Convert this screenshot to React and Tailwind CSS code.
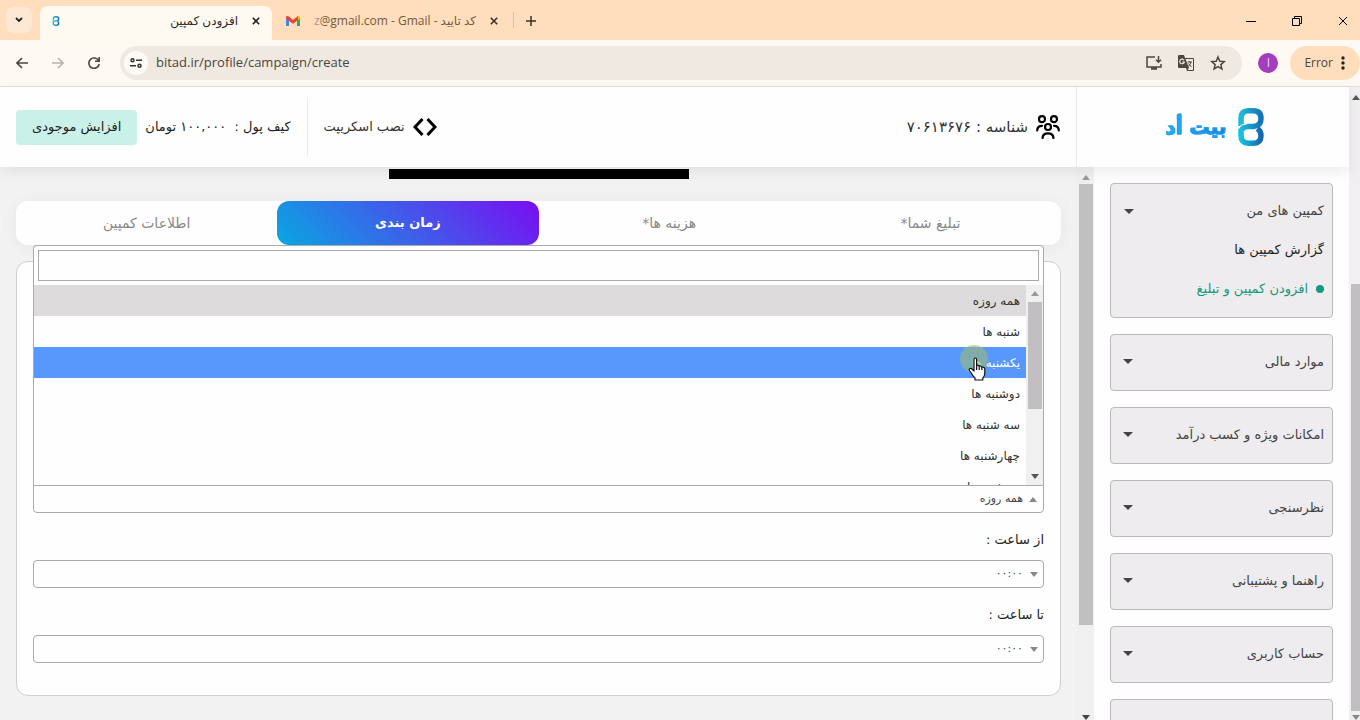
import { useState } from 'react';

const MENU_ITEMS = [
    "موارد مالی", "امکانات ویژه و کسب درآمد", "نظرسنجی",
    "راهنما و پشتیبانی", "حساب کاربری"
];

const DAYS = [
    "همه روزه", "شنبه ها", "یکشنبه ها", "دوشنبه ها",
    "سه شنبه ها", "چهارشنبه ها", "پنجشنبه ها"
];

const STEPS = ["تبلیغ شما*", "هزینه ها*", "زمان بندی", "اطلاعات کمپین"];

const Triangle = ({ up = false, className = '' }) => (
    <svg viewBox="0 0 8 5" className={`h-[5px] shrink-0 ${className}`} fill="currentColor" preserveAspectRatio="none" aria-hidden="true">
        <path d={up ? "M0 5L4 0L8 5Z" : "M0 0H8L4 5Z"} />
    </svg>
);

const CloseIcon = ({ className = '' }) => (
    <svg viewBox="0 0 10 10" className={className} stroke="currentColor" fill="none" aria-hidden="true">
        <path d="M1 1L9 9M9 1L1 9" />
    </svg>
);

const BrandMark = ({ className = '' }) => (
    <svg viewBox="0 0 26 38" className={className} fill="none" strokeWidth="5.500" aria-hidden="true">
        <defs>
            <linearGradient id="markTop" x1="0" y1="0" x2="1" y2="0">
                <stop offset="0" stopColor="#22b9dc" />
                <stop offset="1" stopColor="#1574b5" />
            </linearGradient>
            <linearGradient id="markBottom" x1="0" y1="0" x2="1" y2="0">
                <stop offset="0" stopColor="#12c3e6" />
                <stop offset="1" stopColor="#1768ab" />
            </linearGradient>
        </defs>
        <path d="M3 18V10.500Q3 2.800 10.500 2.800H15Q23 2.800 23 10.500Q23 18 15.500 18.500H10Q5 18.800 3.500 22" stroke="url(#markTop)" />
        <path d="M3 21V27.500Q3 35.200 10.500 35.200H15.500Q23 35.200 23 27.500Q23 23.500 19.500 20.500" stroke="url(#markBottom)" />
        <path d="M0 20Q3 16 9 15.800" stroke="#fefefe" strokeWidth="1" />
    </svg>
);

const UsersIcon = () => (
    <svg viewBox="0 0 24 24" className="size-6" fill="none" stroke="#000" strokeWidth="2.200" strokeLinecap="round" aria-hidden="true">
        <circle cx="6" cy="4.200" r="3" />
        <circle cx="18" cy="4.200" r="3" />
        <circle cx="12" cy="12" r="3" />
        <path d="M1.200 15.500C1.200 12.500 3 10.800 6 10.800M22.800 15.500C22.800 12.500 21 10.800 18 10.800M6.600 23C6.600 20 8.800 18.300 12 18.300C15.200 18.300 17.400 20 17.400 23" />
    </svg>
);

const TabStrip = () => (
    <div className="flex h-10 items-end bg-[#fedebd] text-xs text-[#3b3026]">
        <button type="button" aria-label="Search tabs" className="mb-[7px] ml-1.5 flex size-6.5 items-center justify-center rounded-lg bg-[#fde8d5]">
            <svg viewBox="0 0 8 6" className="w-2" fill="none" stroke="#222" strokeWidth="1.800"><path d="M1 1L4 4L7 1" /></svg>
        </button>
        <div className="ml-2 flex h-8.5 w-58 items-center rounded-t-lg bg-[#fefaf1] pr-2.5 pb-1 pl-3">
            <BrandMark className="h-2.5 w-2" />
            <span className="flex-1 pr-3 text-right text-[#2e2a26]" dir="rtl">افزودن کمپین</span>
            <button type="button" aria-label="Close tab" className="flex size-3 items-center justify-center"><CloseIcon className="size-2 stroke-2 text-[#222]" /></button>
        </div>
        <div className="flex h-8.5 w-60 items-center pr-3 pb-1 pl-3.5">
            <svg viewBox="0 0 14 11" className="h-3 w-3.5 shrink-0" aria-hidden="true">
                <path d="M0 2V10.500H3V4.500Z" fill="#4285f4" />
                <path d="M14 2V10.500H11V4.500Z" fill="#34a853" />
                <path d="M11 5.500V1.500L12.300 .4Q14 0 14 2V3.200Z" fill="#fbbc04" />
                <path d="M0 3.200V2Q0 -.2 2 .6L7 4.500L12 .6V4.500L7 8.300Z" fill="#ea4335" />
            </svg>
            <div className="relative ml-2 flex flex-1 justify-end pr-3 whitespace-nowrap text-[#77583b]">
                <span>z@gmail.com - Gmail - کد تایید</span>
                <span className="absolute inset-y-0 left-0 w-4 bg-linear-to-r from-[#fedebd] to-transparent" />
            </div>
            <button type="button" aria-label="Close tab" className="flex size-3 items-center justify-center"><CloseIcon className="size-2 stroke-2" /></button>
        </div>
        <span className="mb-3 ml-px h-4 w-px bg-[#f5bc72]" />
        <button type="button" aria-label="New tab" className="mb-3.5 ml-3">
            <svg viewBox="0 0 10 10" className="size-2.5" stroke="#3b3026" strokeWidth="1.500"><path d="M5 0V10M0 5H10" /></svg>
        </button>
        <div className="ml-auto flex gap-9 pr-3 pb-3.5 text-black">
            <button type="button" aria-label="Minimize">
                <svg viewBox="0 0 10 10" className="size-2.5" stroke="currentColor"><path d="M0 5.500H10" /></svg>
            </button>
            <button type="button" aria-label="Restore">
                <svg viewBox="0 0 10 10" className="size-2.5" stroke="currentColor" fill="none"><path d="M.5 2.500H7.500V9.500H.5ZM2.500 2.500V.5H9.500V7.500H7.500" /></svg>
            </button>
            <button type="button" aria-label="Close"><CloseIcon className="size-2.5" /></button>
        </div>
    </div>
);

const AddressBar = () => (
    <div className="flex h-[47px] items-center border-b border-[#e9ded8] bg-[#fef9f3] text-[#4b4640]">
        <div className="flex items-center gap-6 pl-4">
            <button type="button" aria-label="Back">
                <svg viewBox="0 0 12 12" className="size-3" fill="none" stroke="currentColor" strokeWidth="1.600"><path d="M12 6H1M6 1L1 6L6 11" /></svg>
            </button>
            <button type="button" aria-label="Forward" className="text-[#b9b3ac]">
                <svg viewBox="0 0 12 12" className="size-3" fill="none" stroke="currentColor" strokeWidth="1.600"><path d="M0 6H11M6 1L11 6L6 11" /></svg>
            </button>
            <button type="button" aria-label="Reload">
                <svg viewBox="0 0 12 12" className="size-3" fill="none" stroke="currentColor" strokeWidth="1.600"><path d="M10.800 4A5.200 5.200 0 1 0 11.200 7M11.200 0V4.300H7" /></svg>
            </button>
        </div>
        <div className="ml-5 flex h-8.5 flex-1 items-center rounded-full bg-[#efe9e1] pr-4 pl-1">
            <span className="flex size-6 items-center justify-center rounded-full bg-[#fefaf5]">
                <svg viewBox="0 0 12 10" className="h-2.5 w-3" fill="none" stroke="#333" strokeWidth="1.500">
                    <circle cx="2.500" cy="2.300" r="1.500" />
                    <circle cx="9.500" cy="7.700" r="1.500" />
                    <path d="M6 2.300H12M0 7.700H6" />
                </svg>
            </span>
            <input
                type="text"
                aria-label="Address"
                defaultValue="bitad.ir/profile/campaign/create"
                dir="ltr"
                className="ml-2 flex-1 bg-transparent text-[13px] focus:outline-none"
            />
            <div className="flex items-center gap-4">
                <button type="button" aria-label="Install app">
                    <svg viewBox="0 0 16 14" className="h-3.5 w-4" fill="none" stroke="currentColor" strokeWidth="1.500">
                        <path d="M9 1H1V11H15V8M12.500 0V6M10 3.800L12.500 6.300L15 3.800" />
                        <path d="M5 12.500H11" strokeWidth="2.500" />
                    </svg>
                </button>
                <button type="button" aria-label="Translate">
                    <svg viewBox="0 0 16 16" className="size-4" aria-hidden="true">
                        <path d="M0 1Q0 0 1 0H6L7 3H15Q16 3 16 4V15Q16 16 15 16H9L8 13H1Q0 13 0 12Z" fill="#4b4640" />
                        <path d="M7.500 4H15V15H9.500L11 13Z" fill="#efe9e1" />
                        <path d="M6 5.200A2.300 2.300 0 1 0 6.300 7H4.200" fill="none" stroke="#efe9e1" strokeWidth="1.200" />
                        <path d="M9.500 7H14M11.700 6V7M13 7Q12.500 9.500 10 11.500M10.500 8.500L13.500 12" fill="none" stroke="#4b4640" />
                    </svg>
                </button>
                <button type="button" aria-label="Bookmark">
                    <svg viewBox="0 0 16 16" className="size-4" fill="none" stroke="currentColor" strokeWidth="1.500"><path d="M8 2L9.800 6.200L14.300 6.600L10.900 9.600L11.900 14L8 11.700L4.100 14L5.100 9.600L1.700 6.600L6.200 6.200Z" /></svg>
                </button>
            </div>
        </div>
        <span className="ml-4 flex size-5 items-center justify-center rounded-full bg-[#a43dbd] text-xs text-[#ecd0f2]">I</span>
        <button type="button" className="ml-3 flex h-8.5 items-center gap-2 rounded-full bg-[#fedebd] pr-[15px] pl-3.5 text-xs">
            Error
            <svg viewBox="0 0 4 14" className="h-3.5 w-1" fill="#222"><circle cx="2" cy="2" r="1.700" /><circle cx="2" cy="7" r="1.700" /><circle cx="2" cy="12" r="1.700" /></svg>
        </button>
    </div>
);

const SiteHeader = () => (
    <header className="relative z-20 flex h-20 shrink-0 items-center bg-[#fefefe] text-[13px] text-[#333] shadow-[0_4px_14px_rgba(0,0,0,0.08)]">
        <a href="#home" className="flex h-full w-[273px] items-center justify-center gap-3 border-l border-[#eeebef] pl-1">
            <BrandMark className="h-[38px] w-[26px]" />
            <span className="bg-linear-to-l from-[#1a7fe0] to-[#1fb5f7] bg-clip-text text-xl font-bold text-transparent [-webkit-text-stroke:1px_#1f9ff0]">بیت أد</span>
        </a>
        <div className="flex items-center gap-2 pr-4 text-[15px]">
            <UsersIcon />
            <span>شناسه : ۷۰۶۱۳۶۷۶</span>
        </div>
        <div className="mr-auto flex items-center pl-4">
            <a href="#script" className="flex items-center gap-2 pl-4">
                <svg viewBox="0 0 24 18" className="h-[18px] w-6" fill="none" stroke="#000" strokeWidth="3"><path d="M9.500 1L2 9L9.500 17M14.500 1L22 9L14.500 17" /></svg>
                نصب اسکریپت
            </a>
            <span className="h-15 w-px bg-[#eeebef]" />
            <span className="pr-4 pl-2 text-[#222]">کیف پول :&nbsp; ۱۰۰,۰۰۰ تومان</span>
            <button type="button" className="h-[35px] rounded bg-[#caf1e8] px-4 text-[#222]">افزایش موجودی</button>
        </div>
    </header>
);

const Sidebar = () => (
    <aside className="w-[255px] shrink-0 overflow-hidden bg-[#fefefe] p-4 text-[13px] text-[#444]">
        <nav className="flex flex-col gap-4">
            <div className="rounded border border-[#bbb8bb] bg-[#eeecee]">
                <button type="button" className="flex h-[54px] w-full items-center justify-between pr-2 pl-[13px]">
                    کمپین های من
                    <Triangle className="w-2.5" />
                </button>
                <ul className="pr-2 pb-[7px]">
                    <li className="flex h-6 items-center text-[#222]"><a href="#reports">گزارش کمپین ها</a></li>
                    <li className="flex h-12 items-center gap-2 pt-1.5 text-[#189a7b]">
                        <span className="size-2 rounded-full bg-[#119c7c]" />
                        <a href="#create">افزودن کمپین و تبلیغ</a>
                    </li>
                </ul>
            </div>
            {MENU_ITEMS.map((item) => (
                <button key={item} type="button" className="flex h-[57px] shrink-0 items-center justify-between rounded border border-[#bbb8bb] bg-[#eeecee] pr-2 pb-0.5 pl-3">
                    {item}
                    <Triangle className="w-2.5" />
                </button>
            ))}
            <div className="h-[57px] shrink-0 rounded border border-[#bbb8bb] bg-[#eeecee]" />
        </nav>
    </aside>
);

const DaySelect = () => {
    const [day, setDay] = useState(DAYS[0]);
    const [active, setActive] = useState(DAYS[2]);
    const [query, setQuery] = useState('');

    return (
        <div className="relative text-xs">
            <div className="absolute inset-x-0 bottom-full z-10 rounded-t border border-b-0 border-[#aaa] bg-[#fefefe]">
                <div className="p-1">
                    <input
                        type="text"
                        aria-label="جستجو"
                        value={query}
                        onChange={(e) => setQuery(e.target.value)}
                        className="block h-[31px] w-full border border-[#aaa] bg-[#fefefe] px-1 focus:outline-none"
                    />
                </div>
                <div className="flex h-50">
                    <div className="flex w-[17px] shrink-0 flex-col items-center bg-[#f1f0f1] py-1.5">
                        <Triangle up className="w-2 text-[#999]" />
                        <span className="mt-1.5 h-[107px] w-3.5 bg-[#c1bfc1]" />
                        <Triangle className="mt-auto w-2 text-[#555]" />
                    </div>
                    <ul role="listbox" className="flex-1 overflow-hidden text-[#333]">
                        {DAYS.filter((d) => d.includes(query)).map((d) => (
                            <li
                                key={d}
                                role="option"
                                aria-selected={d === day}
                                onMouseEnter={() => setActive(d)}
                                onClick={() => setDay(d)}
                                className={`flex h-[31px] items-center px-1.5 ${d === active ? 'bg-[#5897fb] text-white' : d === day ? 'bg-[#dddbdc]' : ''}`}
                            >
                                {d}
                            </li>
                        ))}
                    </ul>
                </div>
            </div>
            <button type="button" aria-label="روزهای نمایش" className="flex h-7 w-full items-center gap-1.5 rounded-b border border-[#aaa] bg-[#fefefe] px-1.5 text-[11px] text-[#444]">
                <Triangle up className="w-2 text-[#888]" />
                {day}
            </button>
            {/* Pointer with click highlight */}
            <div className="pointer-events-none absolute right-14 bottom-35 z-20">
                <span className="block size-7 rounded-full bg-[#9dbb78]/60" />
                <svg viewBox="0 0 18 24" className="absolute top-3 left-2 h-6 w-[18px]" fill="#fff" stroke="#111" strokeWidth="1.200" strokeLinejoin="round">
                    <path d="M6 14V2.500Q6 1 7.300 1Q8.600 1 8.600 2.500V9Q9 8 10 8.200Q11.200 8.400 11.200 9.500Q11.800 8.800 12.700 9Q13.700 9.200 13.800 10.300Q15 9.700 16 10.500Q16.800 11 16.800 12V16Q16.800 19 14.800 21V23H7V21Q5 19 3.500 16.500L1.500 13.500Q.8 12 2 11.500Q3 11.200 4.200 12.300Z" />
                    <path d="M8.600 9V13M11.200 9.500V13M13.800 10.300V13" fill="none" />
                </svg>
            </div>
        </div>
    );
};

const TimeSelect = ({ id, label }) => (
    <div>
        <label htmlFor={id} className="flex h-[47px] items-center pt-1.5 text-[13px] text-[#222]">{label}</label>
        <div className="relative h-7">
            <select id={id} className="h-7 w-full appearance-none rounded border border-[#aaa] bg-[#fefefe] pr-5 pl-2 text-[11px] text-[#444]">
                <option>۰۰:۰۰</option>
                <option>۱۲:۰۰</option>
            </select>
            <Triangle className="pointer-events-none absolute top-3 right-1.5 w-2 text-[#888]" />
        </div>
    </div>
);

const App = () => (
    <div className="flex h-screen flex-col overflow-hidden bg-[#f3f2f3] font-['Open_Sans','DejaVu_Sans',sans-serif]">
        <TabStrip />
        <AddressBar />
        <div className="flex min-h-0 flex-1 font-['DejaVu_Sans',sans-serif]">
            <div className="flex min-w-0 flex-1 flex-col" dir="rtl">
                <SiteHeader />
                <div className="flex min-h-0 flex-1">
                    <Sidebar />
                    <div className="flex w-[17px] shrink-0 flex-col items-center bg-[#f1f0f1] pt-2">
                        <Triangle up className="w-2 text-[#999]" />
                        <span className="mt-1 h-[81%] w-3.5 bg-[#c1bfc1]" />
                        <Triangle className="mt-auto w-2 text-[#444]" />
                    </div>
                    <main className="min-w-0 flex-1 overflow-hidden px-4 pt-0.5">
                        <div className="mx-auto h-2.5 w-75 bg-black" />
                        <div className="mt-[22px] flex h-11 rounded-xl bg-[#fefefe] text-sm text-[#888] shadow-[0_2px_16px_rgba(0,0,0,0.05)]">
                            {STEPS.map((step, i) => (
                                <button
                                    key={step}
                                    type="button"
                                    className={`flex-1 rounded-xl ${i === 2 ? 'bg-[linear-gradient(45deg,#08a8e2,#7a0df2)] text-[13px] font-bold text-white' : ''}`}
                                >
                                    {step}
                                </button>
                            ))}
                        </div>
                        <form className="mt-4 rounded-xl border border-[#d0ced0] bg-[#fefefe] px-4 pt-[223px] pb-8">
                            <DaySelect />
                            <TimeSelect id="from-hour" label="از ساعت :" />
                            <TimeSelect id="to-hour" label="تا ساعت :" />
                        </form>
                    </main>
                </div>
            </div>
            {/* Window scrollbar */}
            <div className="flex w-[11px] shrink-0 flex-col items-end bg-[#f1eff1] pt-2">
                <Triangle up className="w-2 text-[#555]" />
                <span className="mt-auto h-[427px] w-[9px] bg-[#c1bfc1]" />
                <Triangle className="mt-1 w-2 text-[#888]" />
            </div>
        </div>
    </div>
);

export default App;
